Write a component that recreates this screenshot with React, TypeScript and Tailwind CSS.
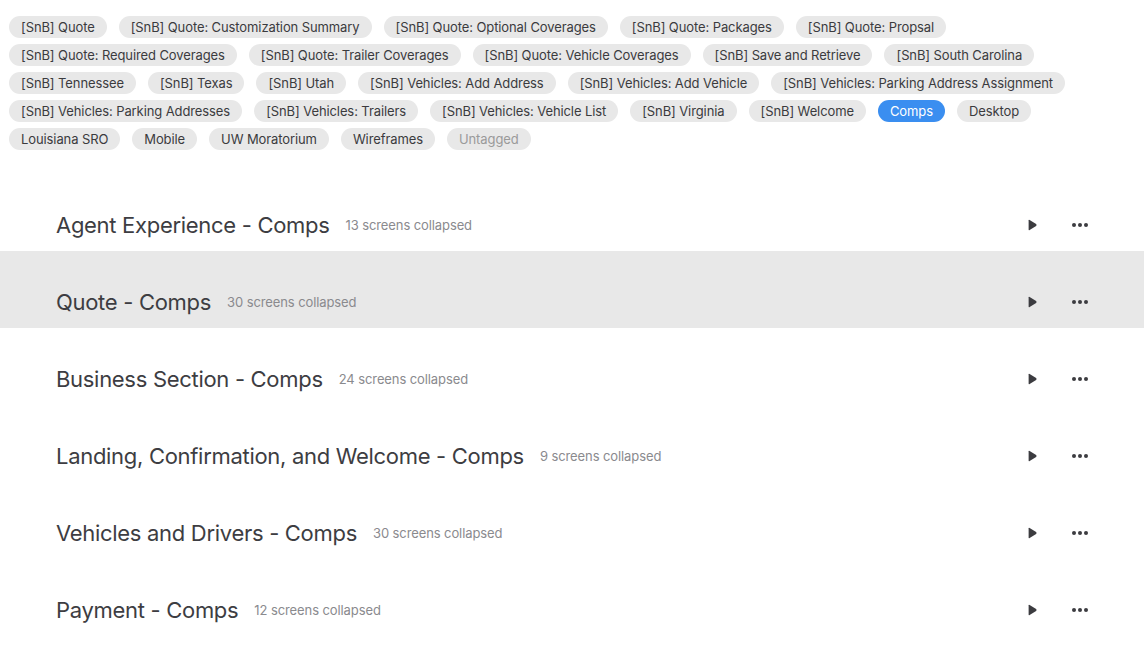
import { Fragment } from "react";

const tags = [
  "[SnB] Quote",
  "[SnB] Quote: Customization Summary",
  "[SnB] Quote: Optional Coverages",
  "[SnB] Quote: Packages",
  "[SnB] Quote: Propsal",
  "[SnB] Quote: Required Coverages",
  "[SnB] Quote: Trailer Coverages",
  "[SnB] Quote: Vehicle Coverages",
  "[SnB] Save and Retrieve",
  "[SnB] South Carolina",
  "[SnB] Tennessee",
  "[SnB] Texas",
  "[SnB] Utah",
  "[SnB] Vehicles: Add Address",
  "[SnB] Vehicles: Add Vehicle",
  "[SnB] Vehicles: Parking Address Assignment",
  "[SnB] Vehicles: Parking Addresses",
  "[SnB] Vehicles: Trailers",
  "[SnB] Vehicles: Vehicle List",
  "[SnB] Virginia",
  "[SnB] Welcome",
  "Comps",
  "Desktop",
  "Louisiana SRO",
  "Mobile",
  "UW Moratorium",
  "Wireframes",
  "Untagged",
];

const sections = [
  { title: "Agent Experience - Comps", count: 13 },
  { title: "Quote - Comps", count: 30, active: true },
  { title: "Business Section - Comps", count: 24 },
  { title: "Landing, Confirmation, and Welcome - Comps", count: 9 },
  { title: "Vehicles and Drivers - Comps", count: 30 },
  { title: "Payment - Comps", count: 12 },
];

function Tag({ label }: { label: string }) {
  const selected = label === "Comps";
  const muted = label === "Untagged";
  return (
    <span
      className={
        selected
          ? "h-[22px] rounded-full bg-[#3a8ef0] px-[12px] text-[13px] leading-[22px] tracking-[-0.1px] text-white"
          : muted
            ? "h-[22px] rounded-full bg-[#e8e8e8] px-[12px] text-[13px] leading-[22px] tracking-[-0.1px] text-[#9a9a9a]"
            : "h-[22px] rounded-full bg-[#e8e8e8] px-[12px] text-[13px] leading-[22px] tracking-[-0.1px] text-[#3b3b3e]"
      }
    >
      {label}
    </span>
  );
}

function PlayIcon() {
  return (
    <svg width="9" height="12" viewBox="0 0 9 12" className="text-[#3c3c40]">
      <path
        d="M1.6 0.9 L8.1 5.1 Q9 6 8.1 6.9 L1.6 11.1 Q0.6 11.7 0.6 10.5 L0.6 1.5 Q0.6 0.3 1.6 0.9 Z"
        fill="currentColor"
      />
    </svg>
  );
}

function DotsIcon() {
  return (
    <svg width="18" height="6" viewBox="0 0 18 6" className="text-[#3c3c40]">
      <circle cx="3" cy="3" r="2" fill="currentColor" />
      <circle cx="9" cy="3" r="2" fill="currentColor" />
      <circle cx="15" cy="3" r="2" fill="currentColor" />
    </svg>
  );
}

function SectionRow({ title, count, active }: { title: string; count: number; active?: boolean }) {
  return (
    <div className={active ? "h-[77px] bg-[#e8e8e8] pt-[38px]" : "h-[77px] pt-[38px]"}>
      <div className="flex h-[26px] items-center pl-[56px] pr-[55px]">
        <span className="text-[22px] leading-[26px] tracking-[-0.3px] text-[#3d3d42]">{title}</span>
        <span className="ml-4 mt-[1px] text-[13px] tracking-[-0.1px] text-[#8a8a8e]">
          {count} screens collapsed
        </span>
        <div className="ml-auto flex items-center gap-[34px]">
          <PlayIcon />
          <DotsIcon />
        </div>
      </div>
    </div>
  );
}

export default function App() {
  return (
    <div
      className="h-[659px] w-[1144px] overflow-hidden bg-white"
      style={{ fontFamily: "Inter, 'Helvetica Neue', Arial, sans-serif" }}
    >
      <div className="flex flex-wrap gap-x-3 gap-y-[6px] px-[9px] pt-4">
        {tags.map((t) => (
          <Fragment key={t}>
            <Tag label={t} />
          </Fragment>
        ))}
      </div>
      <div className="mt-6">
        {sections.map((s) => (
          <SectionRow key={s.title} {...s} />
        ))}
      </div>
    </div>
  );
}
